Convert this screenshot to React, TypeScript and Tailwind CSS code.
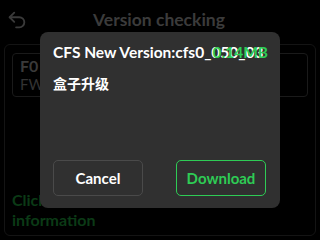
import { Undo2 } from 'lucide-react';

export default function App() {
  const font = { fontFamily: 'Lato, "Noto Sans CJK SC", sans-serif' };

  return (
    <div className="relative w-[320px] h-[240px] overflow-hidden bg-black" style={font}>
      {/* Page behind the dialog */}
      <div className="flex items-center h-[40px] pl-[6px] pr-[8px]">
        <Undo2 className="w-[22px] h-[22px] text-[#3a3a3a]" strokeWidth={2} />
        <h1 className="flex-1 text-center text-[17.5px] font-bold text-[#3b3b3b] pr-[22px]">Version checking</h1>
      </div>
      <div className="mx-[4px] mt-[4px] h-[192px] border border-[#141414] rounded-md px-[7px] pt-[8px]">
        <div className="h-[44px] border border-[#1a1a1a] rounded px-[7px] leading-[18px]">
          <div className="text-[16px] font-bold text-[#3a3a3a] pt-[3px]">F0</div>
          <div className="text-[15px] text-[#333333]">FW</div>
        </div>
        <div className="mt-[93px] text-[16px] font-bold leading-[20px] text-[#0b3a16]">
          <div>Click</div>
          <div>information</div>
        </div>
      </div>

      {/* Dialog */}
      <div className="absolute left-[40px] top-[32px] w-[240px] h-[176px] bg-[#303030] rounded-lg flex flex-col pt-[10px] pl-[13px] pr-[12px] pb-[12px]">
        <div className="relative h-[25px] overflow-hidden text-[15.5px] font-bold leading-[20px] text-white">
          <div className="break-all">CFS New Version:cfs0_050_032_001_000_000_20240101</div>
          <span className="absolute right-0 top-0 text-[#2ecc55]">0.14MB</span>
        </div>
        <div className="mt-[7px] text-[14px] font-bold leading-[20px] text-white">盒子升级</div>
        <div className="flex-1" />
        <div className="flex justify-between pr-[2px]">
          <button className="w-[90px] h-[36px] rounded-[5px] border border-[#4a4a4a] text-white text-[15px] font-bold">
            Cancel
          </button>
          <button className="w-[90px] h-[36px] rounded-[5px] border border-[#2ecc55] text-[#2ecc55] text-[15px] font-bold">
            Download
          </button>
        </div>
      </div>
    </div>
  );
}
